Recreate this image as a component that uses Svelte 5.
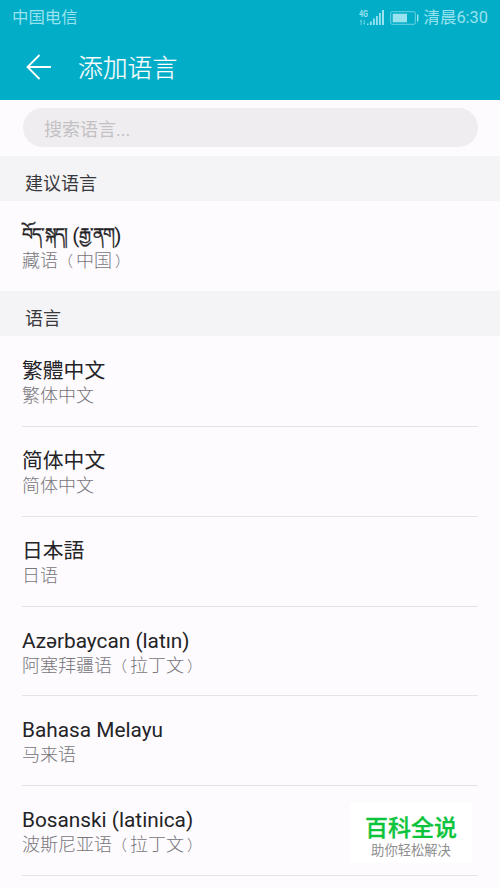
<script lang="ts">
  type Language = {
    name: string;
    label: string;
    lang: string;
  };

  const suggested: Language[] = [
    { name: "བོད་སྐད། (རྒྱ་ནག)", label: "藏语（中国）", lang: "bo" },
  ];

  const languages: Language[] = [
    { name: "繁體中文", label: "繁体中文", lang: "zh-Hant" },
    { name: "简体中文", label: "简体中文", lang: "zh-Hans" },
    { name: "日本語", label: "日语", lang: "ja" },
    { name: "Azərbaycan (latın)", label: "阿塞拜疆语（拉丁文）", lang: "az" },
    { name: "Bahasa Melayu", label: "马来语", lang: "ms" },
    { name: "Bosanski (latinica)", label: "波斯尼亚语（拉丁文）", lang: "bs" },
  ];

  let query = "";

  // Tibetan runs and full-width brackets are set smaller than the text around them
  function splitRuns(text: string): string[] {
    return text.split(/([\u0f00-\u0fff]+|[（）])/).filter(Boolean);
  }

  function isTibetan(run: string): boolean {
    return /[\u0f00-\u0fff]/.test(run);
  }
</script>

<div class="screen">
  <header>
    <div class="status">
      <span>中国电信</span>
      <div class="indicators">
        <svg class="signal" width="27" height="18" viewBox="0 0 27 18">
          <text x="0" y="7.5" textLength="9" lengthAdjust="spacingAndGlyphs">4G</text>
          <path d="M0.5 12.5l1.5-2 1.5 2zM1.5 12h1v4h-1zM4 14l1.2 2 1.2-2zM4.7 11h1v3h-1z" opacity="0.7" />
          <path d="M8 14.5h1.6V16H8zM11 12.5h1.8V16H11zM14 9.5h1.8V16H14zM17 7h1.8v9H17zM20 4h1.8v12H20zM23 1h2v15h-2z" />
        </svg>
        <svg class="battery" width="30" height="14" viewBox="0 0 30 14">
          <rect x="0.7" y="0.7" width="24.6" height="12.6" rx="1.5" fill="none" stroke="currentColor" opacity="0.7" />
          <rect x="2.7" y="2.7" width="14.3" height="8.6" />
          <path d="M27 3.5h1.4v7H27z" />
        </svg>
        <span class="time">清晨6:30</span>
      </div>
    </div>
    <div class="toolbar">
      <button aria-label="返回">
        <svg width="26" height="26" viewBox="0 0 26 26">
          <path d="M13.5 1L1.5 13l12 12M1.5 13H25" />
        </svg>
      </button>
      <h1>添加语言</h1>
    </div>
  </header>

  <div class="search">
    <input type="text" placeholder="搜索语言..." bind:value={query} />
  </div>

  <h2>建议语言</h2>
  <ul>
    {#each suggested as language}
      <li>
        <p class="name" lang={language.lang}>
          {#each splitRuns(language.name) as run}<span class:tibetan={isTibetan(run)}>{run}</span>{/each}
        </p>
        <p class="label">
          {#each splitRuns(language.label) as run}<span class:open={run === "（"} class:close={run === "）"}>{run}</span>{/each}
        </p>
      </li>
    {/each}
  </ul>

  <h2>语言</h2>
  <ul class="divided">
    {#each languages as language}
      <li>
        <p class="name" lang={language.lang}>{language.name}</p>
        <p class="label">
          {#each splitRuns(language.label) as run}<span class:open={run === "（"} class:close={run === "）"}>{run}</span>{/each}
        </p>
      </li>
    {/each}
  </ul>

  <div class="badge">
    <strong>百科全说</strong>
    <span>助你轻松解决</span>
  </div>
</div>

<style>
  :global(body) {
    margin: 0;
    overflow: hidden;
  }

  .screen {
    position: relative;
    width: 500px;
    height: 888px;
    overflow: hidden;
    background: #fdfbfe;
    color: #242326;
    font-family: Roboto, "Noto Sans CJK SC", sans-serif;
  }

  header {
    height: 100px;
    background: #02adc7;
    color: #fff;
  }

  .status {
    display: flex;
    justify-content: space-between;
    align-items: center;
    height: 35px;
    padding: 0 12px;
    color: #98e3ef;
    font-size: 16.4px;
    line-height: 35px;
  }

  .indicators {
    display: flex;
    align-items: center;
  }

  .indicators svg {
    fill: currentColor;
  }

  .signal text {
    font: bold 9px Roboto, sans-serif;
  }

  .battery {
    margin: 0 4px 0 4px;
  }

  .toolbar {
    display: flex;
    align-items: center;
    height: 65px;
    padding-left: 26px;
  }

  button {
    display: flex;
    margin-top: -1px;
    padding: 0;
    border: 0;
    background: none;
  }

  button path {
    fill: none;
    stroke: #fff;
    stroke-width: 1.8;
  }

  h1 {
    margin: 2px 0 0 26px;
    font-size: 24.8px;
    font-weight: 300;
    line-height: 36px;
    -webkit-text-stroke: 0.2px;
  }

  .search {
    height: 39px;
    padding: 8px 22px 9px 23px;
  }

  input {
    display: block;
    box-sizing: border-box;
    width: 100%;
    height: 39px;
    padding: 3px 21px 0;
    border: 0;
    border-radius: 20px;
    background: #efedef;
    font: 18px Roboto, "Noto Sans CJK SC", sans-serif;
  }

  input::placeholder {
    color: #c3c1c4;
  }

  h2 {
    height: 45px;
    margin: 0;
    padding-left: 25px;
    background: #f4f3f5;
    color: #39383b;
    font-size: 18px;
    font-weight: 400;
    line-height: 56px;
  }

  ul {
    margin: 0;
    padding: 0 22px;
    list-style: none;
  }

  li {
    box-sizing: border-box;
    height: 90px;
    padding-top: 22px;
  }

  .divided li {
    height: 89.8px;
    padding-top: 21px;
    border-bottom: 1px solid #e5e3e6;
  }

  .divided li:first-child {
    height: 91px;
    padding-top: 22px;
  }

  p {
    margin: 0;
    white-space: nowrap;
  }

  .name {
    height: 26px;
    font-size: 20.8px;
    line-height: 27px;
  }

  .name:lang(zh-Hant) {
    font-family: Roboto, "Noto Sans CJK TC", sans-serif;
  }

  .name:lang(ja) {
    font-family: Roboto, "Noto Sans CJK JP", sans-serif;
  }

  .tibetan {
    font-size: 17px;
    letter-spacing: -0.8px;
    line-height: 1;
    vertical-align: 3px;
    -webkit-text-stroke: 0.4px;
  }

  .label {
    height: 24px;
    color: #77767a;
    font-size: 18px;
    font-weight: 300;
    line-height: 24px;
  }

  .open,
  .close {
    display: inline-block;
    width: 18px;
    font-size: 15px;
  }

  .close {
    text-indent: 3px;
  }

  .badge {
    position: absolute;
    left: 350px;
    top: 803px;
    display: flex;
    flex-direction: column;
    align-items: center;
    box-sizing: border-box;
    width: 122px;
    height: 60px;
    padding-top: 10px;
    background: #fff;
    white-space: nowrap;
  }

  strong {
    color: #0cc43c;
    font-size: 23px;
    font-weight: 500;
    line-height: 31px;
    -webkit-text-stroke: 0.3px;
  }

  .badge span {
    color: #8e8e8e;
    font-size: 13.3px;
    line-height: 13px;
  }
</style>
